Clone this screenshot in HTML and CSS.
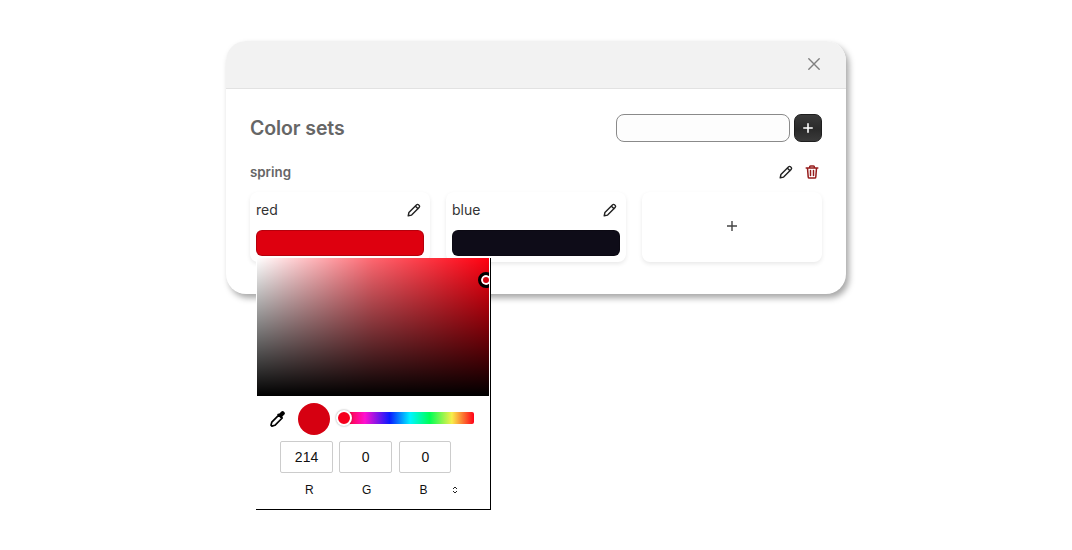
FILE: index.html
```html
<!DOCTYPE html>
<html lang="en">
<head>
<meta charset="utf-8">
<title>Color sets</title>
<link rel="stylesheet" href="styles.css">
</head>
<body>
<div class="modal">
  <header class="modal-head">
    <svg class="close" width="12" height="12" viewBox="0 0 12 12"><path d="M.8.8l10.400 10.400M11.200.8L.8 11.200" fill="none" stroke="#808080" stroke-width="1.400" stroke-linecap="round"/></svg>
  </header>
  <div class="modal-body">
    <div class="title-row">
      <h1>Color sets</h1>
      <div class="new-set">
        <input class="name-input" type="text">
        <button class="add-btn"><svg width="10" height="10" viewBox="0 0 10 10"><path d="M5 .8v8.400M.8 5h8.400" fill="none" stroke="#fff" stroke-width="1.600" stroke-linecap="round"/></svg></button>
      </div>
    </div>
    <div class="set-row">
      <h2>spring</h2>
      <div class="set-actions">
        <svg width="16" height="16" viewBox="0 0 16 16"><use href="#pencil"/></svg>
        <svg width="16" height="16" viewBox="0 0 16 16"><path d="M2.200 4h11.600M5.600 4V2.900c0-.6.4-1 1-1h2.800c.6 0 1 .4 1 1V4M3.500 4l.7 8.900c0 .7.6 1.200 1.200 1.200h5.200c.6 0 1.200-.5 1.200-1.200L12.500 4M6.500 6.600v5M9.500 6.600v5" fill="none" stroke="#961c1c" stroke-width="1.500" stroke-linecap="round" stroke-linejoin="round"/></svg>
      </div>
    </div>
    <div class="cards">
      <div class="card">
        <div class="card-head"><span class="card-name">red</span><svg width="16" height="16" viewBox="0 0 16 16"><use href="#pencil"/></svg></div>
        <div class="swatch swatch-red"></div>
      </div>
      <div class="card">
        <div class="card-head"><span class="card-name">blue</span><svg width="16" height="16" viewBox="0 0 16 16"><use href="#pencil"/></svg></div>
        <div class="swatch swatch-blue"></div>
      </div>
      <div class="card card-add">
        <svg width="10" height="10" viewBox="0 0 10 10"><path d="M5 0v10M0 5h10" fill="none" stroke="#444" stroke-width="1.400"/></svg>
      </div>
    </div>
  </div>
</div>

<div class="picker">
  <div class="sv">
    <div class="sv-white"></div>
    <div class="sv-black"></div>
    <div class="sv-handle"></div>
  </div>
  <div class="controls">
    <svg class="dropper" width="18" height="18" viewBox="0 0 18 18">
      <path d="M10 4.800l3.200 3.200-7.300 7.300-3 .8-.9-.9.800-3.100z" fill="#fff" stroke="#000" stroke-width="1.700" stroke-linejoin="round"/>
      <path d="M8.800 3.800l1.600-.2 2-2c.7-.7 1.700-.7 2.400 0l.6.6c.7.7.7 1.700 0 2.400l-2 2-.2 1.600-.8.700-4.300-4.300z" fill="#000"/>
    </svg>
    <div class="current"></div>
    <div class="hue"><div class="hue-handle"></div></div>
  </div>
  <div class="fields">
    <input class="num" type="text" value="214">
    <input class="num" type="text" value="0">
    <input class="num num-last" type="text" value="0">
  </div>
  <div class="labels">
    <span class="lab lab-r">R</span>
    <span class="lab lab-g">G</span>
    <span class="lab lab-b">B</span>
    <svg class="toggle" width="6" height="8" viewBox="0 0 6 8"><path d="M1 3l2-2 2 2M1 5l2 2 2-2" fill="none" stroke="#222" stroke-width="1"/></svg>
  </div>
</div>

<svg class="defs" width="0" height="0">
  <defs>
    <g id="pencil"><path d="M2.200 13.800l.7-3.300 7.500-7.600c.7-.7 1.700-.7 2.300 0l.4.400c.6.600.6 1.600 0 2.300l-7.500 7.500zM9.300 4l2.700 2.700" fill="none" stroke="#222" stroke-width="1.400" stroke-linejoin="round" stroke-linecap="round"/></g>
  </defs>
</svg>
</body>
</html>
```
FILE: styles.css
```css
* { box-sizing: border-box; }
html, body { margin: 0; padding: 0; height: 100%; overflow: hidden; }
body { background: #fff; font-family: Inter, "Liberation Sans", sans-serif; position: relative; }

.modal {
  width: 620px;
  height: 253px;
  margin: 41px 0 0 226px;
  background: #fff;
  border-radius: 20px;
  box-shadow: 3px 4px 6px rgba(0,0,0,.35);
  overflow: hidden;
}
.modal-head {
  height: 48px;
  background: #f2f2f2;
  border-bottom: 1px solid #e2e2e2;
  display: flex;
  align-items: center;
  justify-content: flex-end;
  padding: 0 26px 1px 0;
}
.modal-body { padding: 25px 24px 0; }
.title-row { display: flex; justify-content: space-between; align-items: center; height: 28px; }
h1 { margin: 0; font-size: 19.500px; font-weight: 600; color: #666; letter-spacing: -.1px; }
.new-set { display: flex; gap: 4px; align-items: center; }
.name-input {
  width: 174px; height: 28px;
  border: 1px solid #8a8a8a; border-radius: 8px;
  background: #fdfdfd; padding: 0 8px;
}
.add-btn {
  width: 28px; height: 28px; padding: 0;
  border: 1px solid #1e1e1e; border-radius: 7px;
  background: linear-gradient(#3a3a3a, #2a2a2a 55%, #3a3a3a);
  display: flex; align-items: center; justify-content: center;
}
.set-row { display: flex; justify-content: space-between; align-items: center; margin-top: 19px; height: 20px; }
h2 { margin: 1px 0 0; font-size: 13.300px; font-weight: 600; color: #666; }
.set-actions { display: flex; gap: 10px; padding-right: 2px; margin-top: 1px; }
.cards { display: grid; grid-template-columns: repeat(3, 180px); gap: 16px; margin-top: 11px; }
.card {
  height: 70px;
  border-radius: 8px;
  background: #fff;
  box-shadow: 0 2px 4px rgba(0,0,0,.09);
  padding: 6px;
}
.card-head { display: flex; justify-content: space-between; align-items: center; height: 24px; padding-right: 2px; font-size: 14px; color: #333; }
.card-name { margin-top: -2px; }
.swatch { height: 26px; margin-top: 8px; border-radius: 6px; border: 1px solid rgba(0,0,0,.18); }
.swatch-red { background: #de000f; }
.swatch-blue { background: #0e0c18; }
.card-add { display: flex; align-items: center; justify-content: center; padding: 0 0 2px; }

.picker {
  position: absolute;
  left: 256px; top: 258px;
  width: 235px; height: 252px;
  background: #fff;
  padding-left: 1px;
  border-right: 1px solid #000;
  border-bottom: 1px solid #000;
}
.sv { position: relative; width: 232px; height: 138px; background: #ff0010; overflow: hidden; }
.sv-white, .sv-black { position: absolute; inset: 0; }
.sv-white { background: linear-gradient(to right, #fff, rgba(255,255,255,.4) 50%, rgba(255,255,255,0)); }
.sv-black { background: linear-gradient(to bottom, rgba(0,0,0,0), rgba(0,0,0,.55) 55%, #000); }
.sv-handle {
  position: absolute; left: 221px; top: 14px;
  width: 16px; height: 16px;
  border-radius: 50%;
  border: 3px solid #000;
  box-shadow: inset 0 0 0 2px #fff;
}
.controls { display: flex; align-items: center; height: 45px; padding-left: 12px; }
.dropper { margin-top: 1px; }
.current { width: 32px; height: 32px; border-radius: 50%; background: #d60011; margin: 1px 0 0 11px; }
.hue {
  position: relative;
  width: 130px; height: 12px;
  margin: 0 0 1px 14px;
  border-radius: 2px;
  background: linear-gradient(to right, #ff0018 0%, #ff10d0 16%, #0a1aff 35%, #00f5ff 51%, #00ff55 66%, #f8ee4a 83%, #ff0018 100%);
}
.hue-handle {
  position: absolute; left: -8px; top: -2px;
  width: 16px; height: 16px;
  border-radius: 50%;
  background: #f5001c;
  border: 2px solid #fff;
  box-shadow: 0 0 2px rgba(0,0,0,.4);
}
.fields { display: flex; gap: 6.500px; padding-left: 23.300px; }
.num {
  width: 52.500px; height: 32px;
  border: 1px solid #ccc; border-radius: 2px;
  padding: 0; text-align: center;
  font: 14px "Liberation Sans", Arial, sans-serif; color: #111;
  background: #fff;
}
.num-last { width: 52px; margin-left: 1px; }
.labels { position: relative; height: 14px; margin-top: 10px; font: 12px "Liberation Sans", Arial, sans-serif; color: #111; }
.lab { position: absolute; top: 0; }
.lab-r { left: 48px; }
.lab-g { left: 105px; }
.lab-b { left: 162.500px; }
.toggle { position: absolute; left: 195px; top: 3px; }
.defs { position: absolute; }
```
